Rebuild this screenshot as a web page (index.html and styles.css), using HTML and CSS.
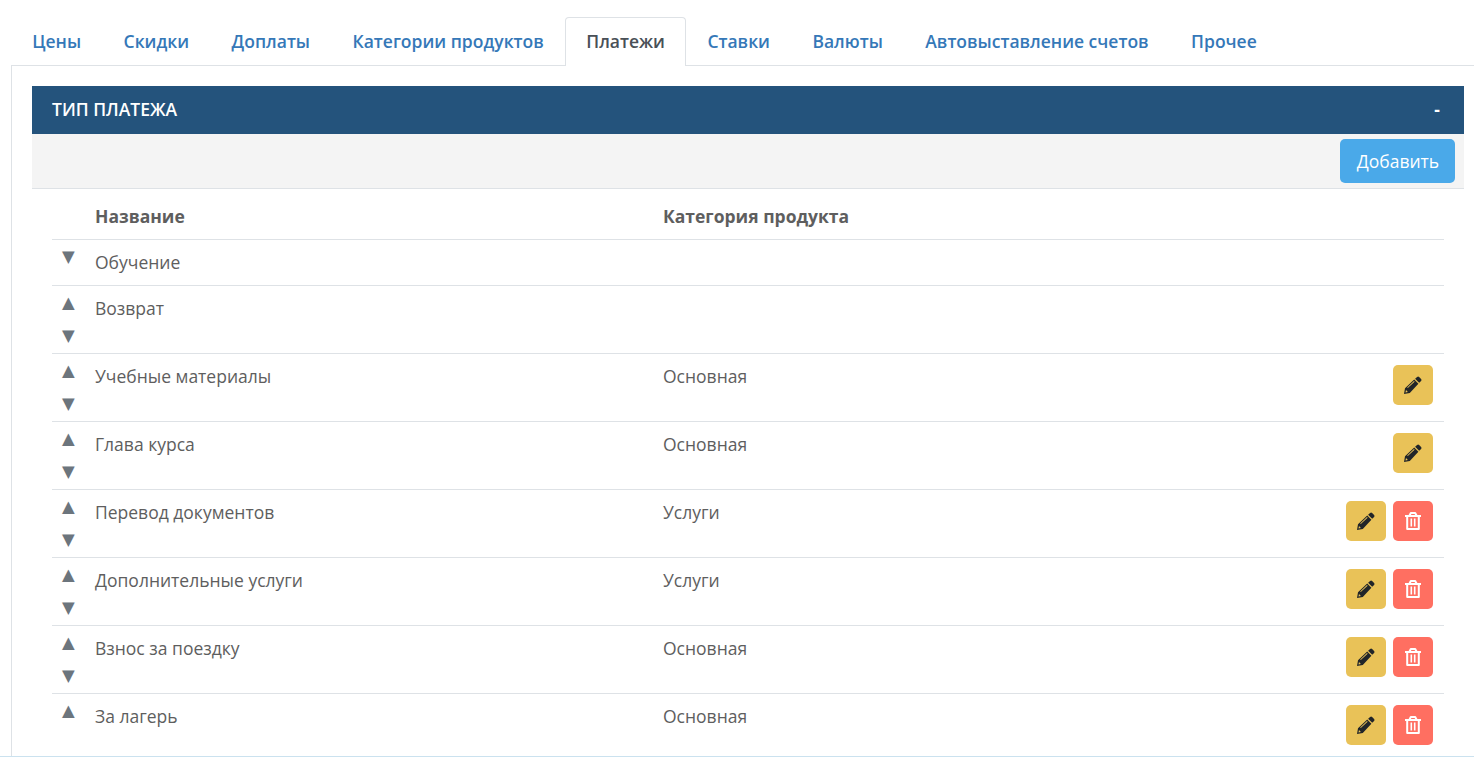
FILE: index.html
```
<!DOCTYPE html>
<html lang="ru">
<head>
<meta charset="utf-8">
<title>Платежи</title>
<link rel="stylesheet" href="styles.css">
</head>
<body>
<svg class="sprite">
<symbol id="pencil" viewBox="0 0 20 20">
<path fill="#212529" fill-rule="evenodd" d="M1 19l1-5.800L11.200 4.600l4.200 4.200L6.800 18zM2.500 17.500l2.400-.5-1.900-1.900zM4.800 13.100l6.800-6.400-.6-.6-6.800 6.400zM12.100 3.700l2-1.800q1-.9 2 0l2 2q.9 1 0 2l-1.900 1.900z"/>
</symbol>
<symbol id="trash" viewBox="0 0 18 20">
<path fill="none" stroke="#fff" stroke-width="2" stroke-linejoin="round" d="M1 5h16M3.200 5v13h11.600V5M5.500 4.500L6.800 2h4.400l1.300 2.500"/>
<path fill="none" stroke="#fff" stroke-width="1.6" d="M7.300 7.500v8M10.700 7.500v8"/>
</symbol>
</svg>
<ul class="tabs">
<li><a href="#">Цены</a></li>
<li><a href="#">Скидки</a></li>
<li><a href="#">Доплаты</a></li>
<li><a href="#">Категории продуктов</a></li>
<li><a href="#" class="active">Платежи</a></li>
<li><a href="#">Ставки</a></li>
<li><a href="#">Валюты</a></li>
<li><a href="#">Автовыставление счетов</a></li>
<li><a href="#">Прочее</a></li>
</ul>
<div class="content">
<div class="panel-title"><span>ТИП ПЛАТЕЖА</span><span class="toggle">-</span></div>
<div class="toolbar"><a href="#" class="add">Добавить</a></div>
<table class="types">
<tr class="head"><th class="order"></th><th class="name">Название</th><th>Категория продукта</th><th class="actions"></th></tr>
<tr class="first"><td class="order"><i>▼</i></td><td>Обучение</td><td></td><td></td></tr>
<tr><td class="order"><i>▲</i><i>▼</i></td><td>Возврат</td><td></td><td></td></tr>
<tr><td class="order"><i>▲</i><i>▼</i></td><td>Учебные материалы</td><td>Основная</td><td><div class="buttons"><a href="#" class="edit"><svg><use href="#pencil"/></svg></a></div></td></tr>
<tr><td class="order"><i>▲</i><i>▼</i></td><td>Глава курса</td><td>Основная</td><td><div class="buttons"><a href="#" class="edit"><svg><use href="#pencil"/></svg></a></div></td></tr>
<tr><td class="order"><i>▲</i><i>▼</i></td><td>Перевод документов</td><td>Услуги</td><td><div class="buttons"><a href="#" class="edit"><svg><use href="#pencil"/></svg></a><a href="#" class="delete"><svg><use href="#trash"/></svg></a></div></td></tr>
<tr><td class="order"><i>▲</i><i>▼</i></td><td>Дополнительные услуги</td><td>Услуги</td><td><div class="buttons"><a href="#" class="edit"><svg><use href="#pencil"/></svg></a><a href="#" class="delete"><svg><use href="#trash"/></svg></a></div></td></tr>
<tr><td class="order"><i>▲</i><i>▼</i></td><td>Взнос за поездку</td><td>Основная</td><td><div class="buttons"><a href="#" class="edit"><svg><use href="#pencil"/></svg></a><a href="#" class="delete"><svg><use href="#trash"/></svg></a></div></td></tr>
<tr><td class="order"><i>▲</i></td><td>За лагерь</td><td>Основная</td><td><div class="buttons"><a href="#" class="edit"><svg><use href="#pencil"/></svg></a><a href="#" class="delete"><svg><use href="#trash"/></svg></a></div></td></tr>
</table>
</div>
</body>
</html>
```

FILE: styles.css
```
* {
	box-sizing: border-box;
}
body {
	margin: 0;
	height: 757px;
	display: flex;
	flex-direction: column;
	overflow: hidden;
	border-bottom: 1px solid #cbe2ef;
	background: #fff;
	color: #5e5e5e;
	font-family: "Open Sans", sans-serif;
	font-size: 17.5px;
	line-height: 26px;
}
a {
	text-decoration: none;
}
.sprite {
	display: none;
}
.tabs {
	display: flex;
	flex: none;
	height: 66px;
	margin: 0 0 0 11px;
	padding: 17px 0 0;
	list-style: none;
	border-bottom: 1px solid #dee2e6;
}
.tabs a {
	display: block;
	height: 49px;
	padding: 10px 20.24px;
	border: 1px solid transparent;
	border-bottom: 0;
	border-radius: 4px 4px 0 0;
	color: #3578b8;
	font-weight: 600;
	white-space: nowrap;
}
.tabs .active {
	border-color: #dee2e6;
	background: #fff;
	color: #495057;
}
.content {
	flex: 1;
	min-height: 0;
	margin-left: 11px;
	padding: 20px 10px 0 20px;
	border-left: 1px solid #dee2e6;
	overflow: hidden;
}
.panel-title {
	display: flex;
	justify-content: space-between;
	height: 48px;
	padding: 10px 24px 0 20px;
	background: #24537c;
	color: #fff;
	font-weight: 600;
}
.toggle {
	font-weight: 700;
}
.toolbar {
	display: flex;
	justify-content: flex-end;
	height: 55px;
	padding: 5px 9px 0 0;
	background: #f4f4f4;
	border-bottom: 1px solid #dee2e6;
}
.add {
	width: 115px;
	height: 44px;
	padding-left: 1px;
	border-radius: 5px;
	background: #4aa9e9;
	color: #fff;
	line-height: 44px;
	text-align: center;
}
.types {
	width: 1392px;
	margin: 0 20px;
	border-collapse: separate;
	border-spacing: 0;
	table-layout: fixed;
}
.types tr {
	height: 68px;
}
.types .head {
	height: 51px;
}
.types .first {
	height: 46px;
}
.types th, .types td {
	padding: 9px 0 0;
	border-bottom: 1px solid #dee2e6;
	text-align: left;
	vertical-align: top;
}
.types th {
	padding-top: 14px;
}
.types .order {
	width: 43px;
	padding: 1px 0 0 10px;
}
.types .name {
	width: 568px;
}
.types .actions {
	width: 120px;
}
.order i {
	display: block;
	height: 32.5px;
	color: #6c757d;
	font: 16.5px/32px "DejaVu Sans", sans-serif;
}
.buttons {
	display: flex;
	justify-content: flex-end;
	gap: 7px;
	height: 40px;
	margin: 2px 11px 0 0;
}
.edit, .delete {
	display: flex;
	align-items: center;
	justify-content: center;
	width: 40px;
	height: 40px;
	border-radius: 5px;
	background: #e9c258;
}
.delete {
	background: #ff6f61;
}
.buttons svg {
	width: 20px;
	height: 20px;
}
```
